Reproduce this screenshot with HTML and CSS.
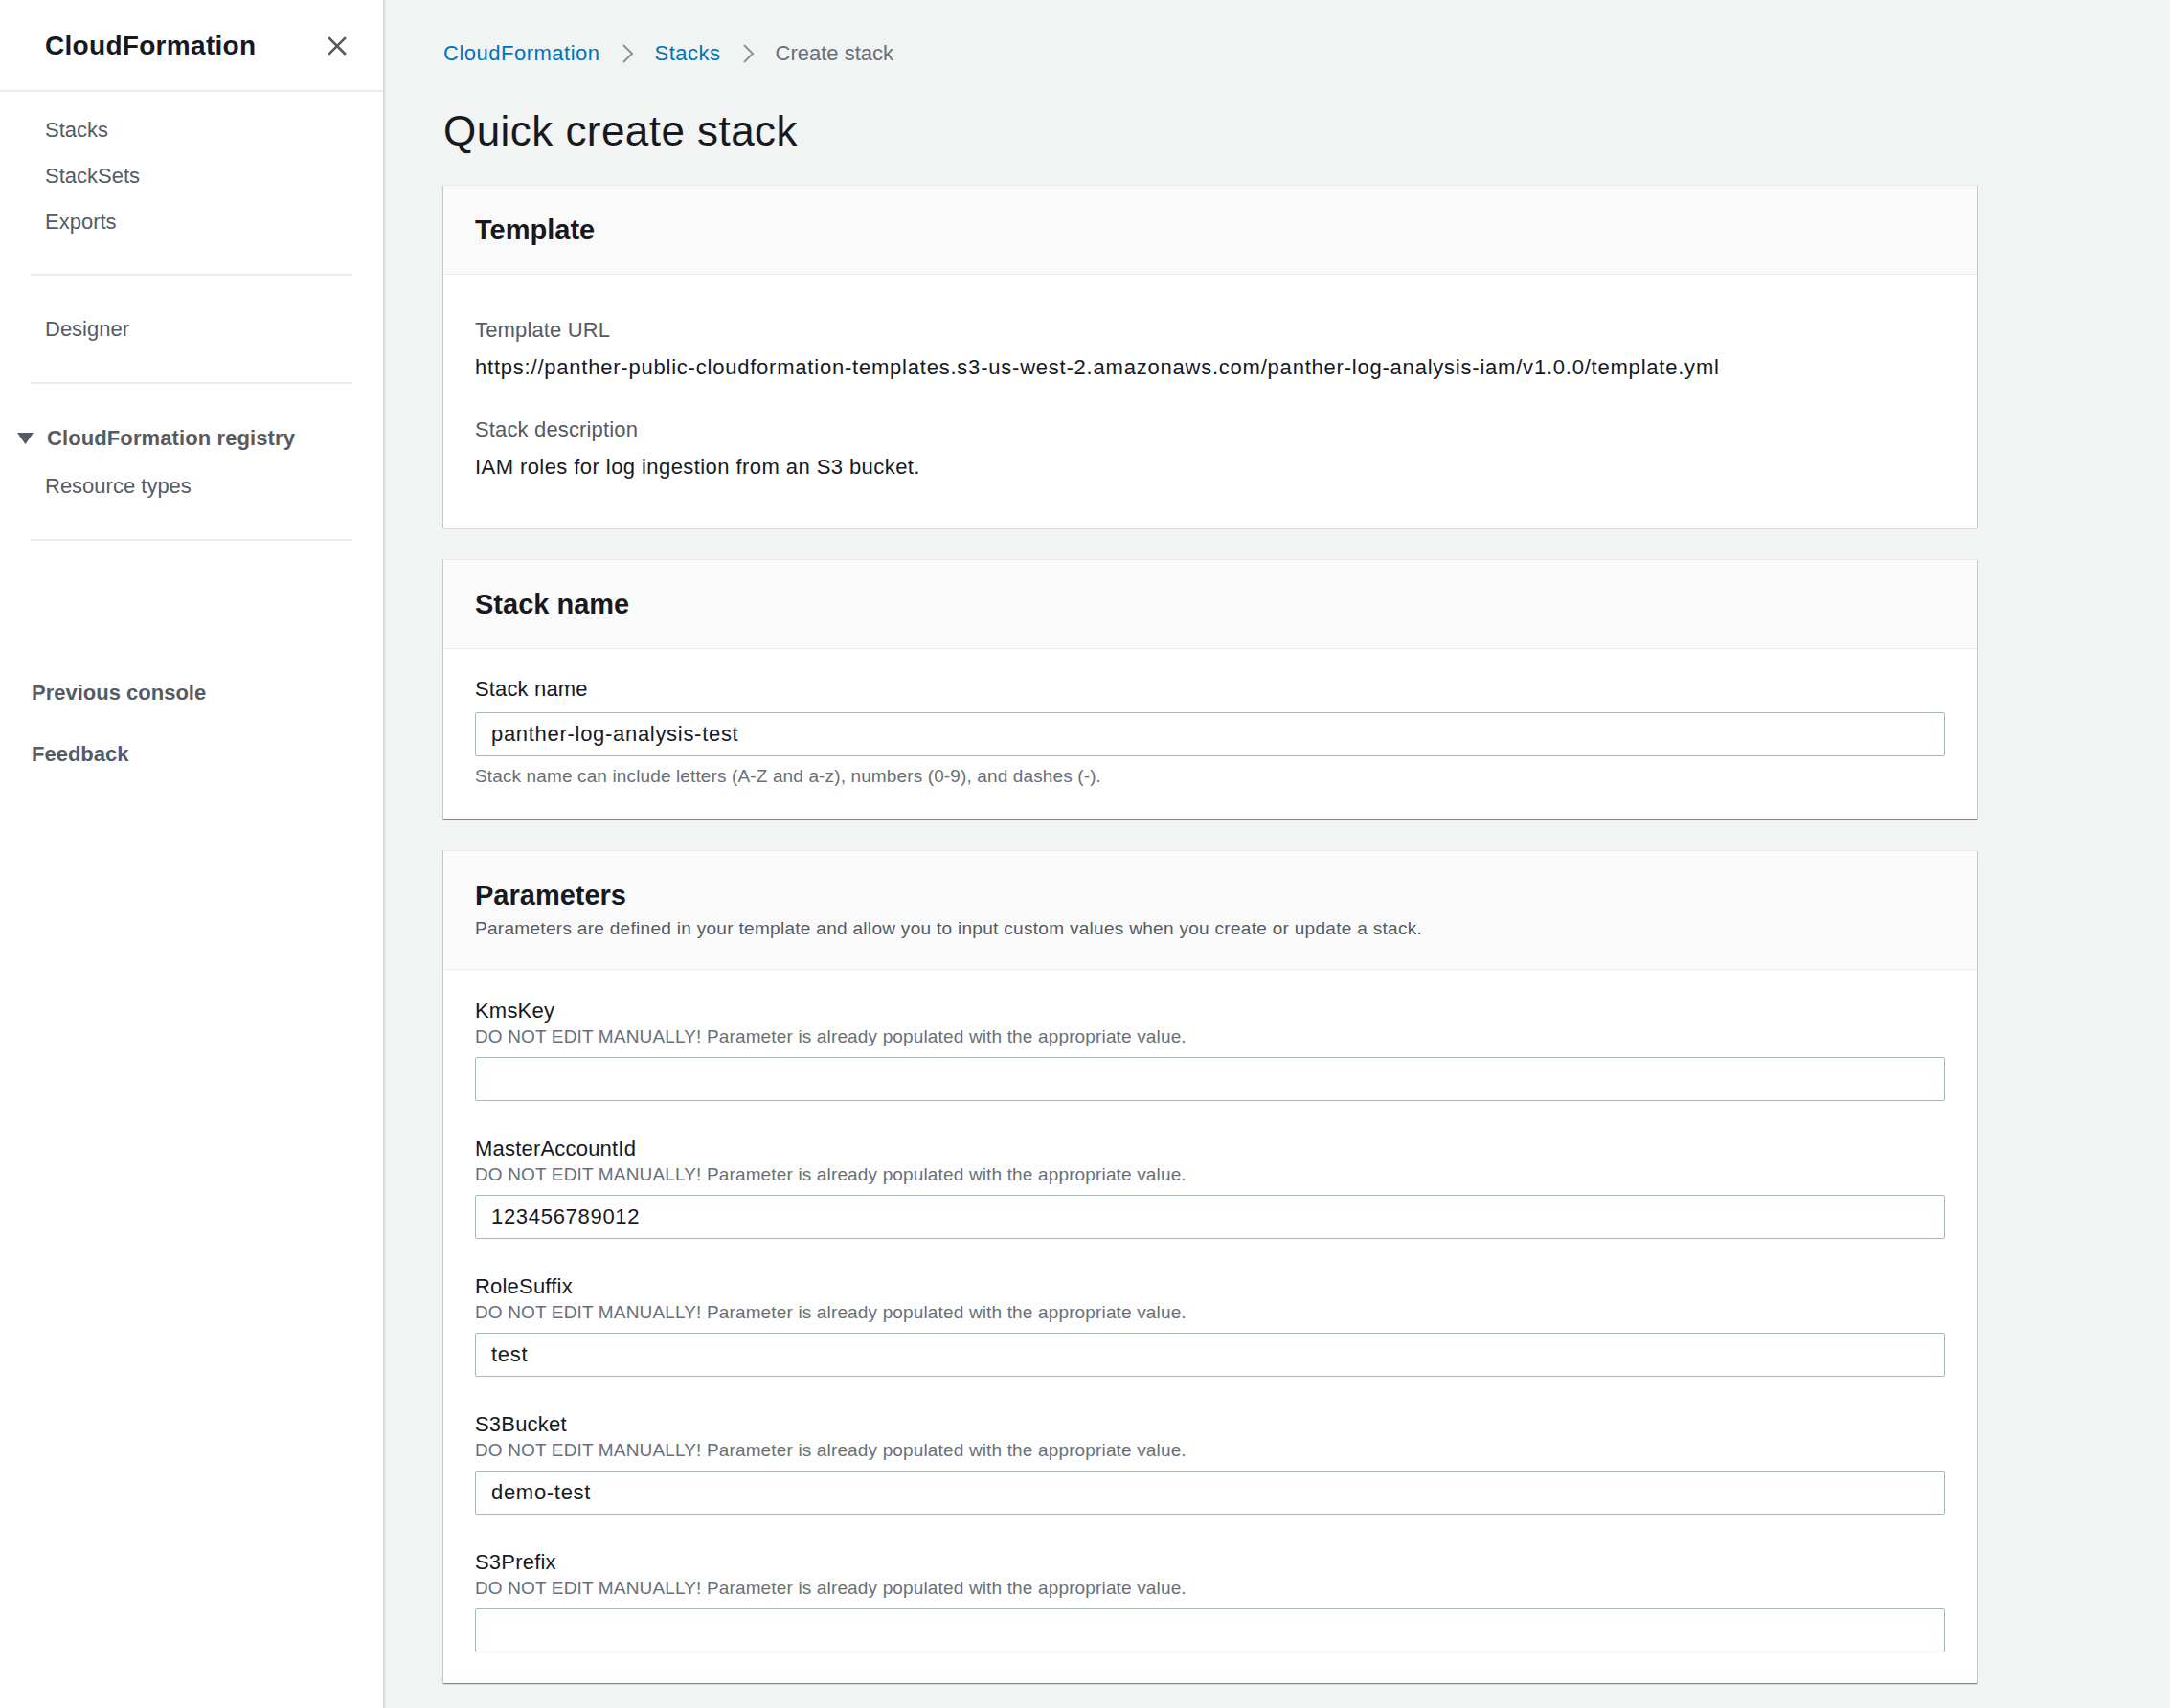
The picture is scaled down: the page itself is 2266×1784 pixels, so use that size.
FILE: index.html
```html
<!DOCTYPE html>
<html lang="en">
<head>
<meta charset="utf-8">
<title>Quick create stack</title>
<link rel="stylesheet" href="styles.css">
</head>
<body>
<div class="app">
  <aside class="sidenav">
    <div class="sidenav-header">
      <h2 class="sidenav-title">CloudFormation</h2>
      <button class="close-btn" aria-label="Close">
        <svg width="20" height="20" viewBox="0 0 20 20"><path d="M2 2 L18 18 M18 2 L2 18" stroke="#545b64" stroke-width="2.6" fill="none" stroke-linecap="square"/></svg>
      </button>
    </div>
    <ul class="nav-list nav-first">
      <li>Stacks</li>
      <li>StackSets</li>
      <li>Exports</li>
    </ul>
    <div class="nav-divider"></div>
    <ul class="nav-list nav-group">
      <li>Designer</li>
    </ul>
    <div class="nav-divider"></div>
    <div class="nav-section">
      <div class="section-toggle">
        <svg class="caret" width="17" height="12" viewBox="0 0 17 12"><path d="M0 0 H17 L8.5 12 Z" fill="#545b64"/></svg>
        <span>CloudFormation registry</span>
      </div>
      <ul class="nav-list">
        <li>Resource types</li>
      </ul>
    </div>
    <div class="nav-divider"></div>
    <ul class="nav-extra">
      <li>Previous console</li>
      <li>Feedback</li>
    </ul>
  </aside>

  <main class="main">
    <nav class="breadcrumb">
      <a class="crumb-link">CloudFormation</a>
      <svg class="crumb-sep" width="13" height="20" viewBox="0 0 13 20"><path d="M2 1 L11 10 L2 19" stroke="#879596" stroke-width="2" fill="none"/></svg>
      <a class="crumb-link">Stacks</a>
      <svg class="crumb-sep" width="13" height="20" viewBox="0 0 13 20"><path d="M2 1 L11 10 L2 19" stroke="#879596" stroke-width="2" fill="none"/></svg>
      <span class="crumb-current">Create stack</span>
    </nav>

    <h1 class="page-title">Quick create stack</h1>

    <section class="card">
      <div class="card-header">
        <h2 class="card-title">Template</h2>
      </div>
      <div class="card-body kv-body">
        <div class="kv">
          <div class="kv-label">Template URL</div>
          <div class="kv-value kv-url">https://panther-public-cloudformation-templates.s3-us-west-2.amazonaws.com/panther-log-analysis-iam/v1.0.0/template.yml</div>
        </div>
        <div class="kv">
          <div class="kv-label">Stack description</div>
          <div class="kv-value">IAM roles for log ingestion from an S3 bucket.</div>
        </div>
      </div>
    </section>

    <section class="card">
      <div class="card-header">
        <h2 class="card-title">Stack name</h2>
      </div>
      <div class="card-body name-body">
        <label class="field-label">Stack name</label>
        <input class="text-input name-input" type="text" value="panther-log-analysis-test">
        <div class="help-text">Stack name can include letters (A-Z and a-z), numbers (0-9), and dashes (-).</div>
      </div>
    </section>

    <section class="card">
      <div class="card-header">
        <h2 class="card-title">Parameters</h2>
        <p class="card-desc">Parameters are defined in your template and allow you to input custom values when you create or update a stack.</p>
      </div>
      <div class="card-body params-body">
        <div class="param">
          <div class="param-label">KmsKey</div>
          <div class="param-desc">DO NOT EDIT MANUALLY! Parameter is already populated with the appropriate value.</div>
          <input class="text-input" type="text" value="">
        </div>
        <div class="param">
          <div class="param-label">MasterAccountId</div>
          <div class="param-desc">DO NOT EDIT MANUALLY! Parameter is already populated with the appropriate value.</div>
          <input class="text-input" type="text" value="123456789012">
        </div>
        <div class="param">
          <div class="param-label">RoleSuffix</div>
          <div class="param-desc">DO NOT EDIT MANUALLY! Parameter is already populated with the appropriate value.</div>
          <input class="text-input" type="text" value="test">
        </div>
        <div class="param">
          <div class="param-label">S3Bucket</div>
          <div class="param-desc">DO NOT EDIT MANUALLY! Parameter is already populated with the appropriate value.</div>
          <input class="text-input" type="text" value="demo-test">
        </div>
        <div class="param">
          <div class="param-label">S3Prefix</div>
          <div class="param-desc">DO NOT EDIT MANUALLY! Parameter is already populated with the appropriate value.</div>
          <input class="text-input" type="text" value="">
        </div>
      </div>
    </section>
  </main>
</div>
</body>
</html>
```

FILE: styles.css
```css
* {
  box-sizing: border-box;
}

html, body {
  margin: 0;
  padding: 0;
  height: 100%;
}

body {
  overflow: hidden;
  background: #f2f3f3;
  font-family: "Liberation Sans", Arial, sans-serif;
  font-size: 22px;
  color: #16191f;
}

.app {
  display: flex;
  min-height: 100%;
}

/* ---------- Side navigation ---------- */
.sidenav {
  flex: 0 0 401px;
  width: 401px;
  background: #ffffff;
  border-right: 1px solid #d5dbdb;
  box-shadow: 1px 0 1px 0 rgba(0, 28, 36, 0.12);
  min-height: 1784px;
}

.sidenav-header {
  display: flex;
  align-items: center;
  justify-content: space-between;
  padding: 30px 38px 28px 47px;
  border-bottom: 2px solid #eaeded;
}

.sidenav-title {
  margin: 0;
  font-size: 28px;
  line-height: 36px;
  font-weight: 700;
  letter-spacing: 0.3px;
  color: #16191f;
}

.close-btn {
  display: flex;
  align-items: center;
  justify-content: center;
  width: 20px;
  height: 20px;
  padding: 0;
  border: 0;
  background: transparent;
}

.nav-list,
.nav-extra {
  list-style: none;
  margin: 0;
  padding: 0;
}

.nav-list li {
  padding-left: 47px;
  line-height: 48px;
  color: #545b64;
}

.nav-first {
  padding-top: 16px;
  padding-bottom: 30px;
}

.nav-group {
  padding-top: 32px;
  padding-bottom: 31px;
}

.nav-divider {
  height: 2px;
  margin: 0 32px;
  background: #eaeded;
}

.nav-section {
  padding-top: 33px;
  padding-bottom: 31px;
}

.section-toggle {
  display: flex;
  align-items: center;
  gap: 14px;
  padding-left: 18px;
  line-height: 48px;
  font-weight: 700;
  letter-spacing: 0.1px;
  color: #545b64;
  margin-bottom: 2px;
}

.caret {
  flex: 0 0 auto;
}

.nav-extra {
  padding-top: 135px;
}

.nav-extra li {
  padding-left: 33px;
  line-height: 48px;
  font-weight: 700;
  color: #545b64;
  margin-bottom: 16px;
}

/* ---------- Main content ---------- */
.main {
  flex: 1 1 auto;
  padding: 40px 202px 24px 62px;
}

.breadcrumb {
  display: flex;
  align-items: center;
  height: 32px;
  line-height: 32px;
}

.crumb-link {
  color: #0073bb;
  text-decoration: none;
  letter-spacing: 0.5px;
}

.crumb-sep {
  margin: 0 22px;
  flex: 0 0 auto;
}

.crumb-current {
  color: #687078;
}

.page-title {
  margin: 37px 0 28px;
  font-size: 44px;
  line-height: 56px;
  font-weight: 400;
  letter-spacing: 0.45px;
  color: #16191f;
}

.card {
  background: #ffffff;
  border-top: 1px solid #eaeded;
  box-shadow: 0 1px 1px 0 rgba(0, 28, 36, 0.3), 1px 1px 1px 0 rgba(0, 28, 36, 0.15), -1px 1px 1px 0 rgba(0, 28, 36, 0.15);
  margin-bottom: 33px;
}

.card-header {
  background: #fafafa;
  padding: 28px 33px 28px;
  border-bottom: 1px solid #eaeded;
}

.card-title {
  margin: 0;
  font-size: 29px;
  line-height: 36px;
  font-weight: 700;
  color: #16191f;
}

.card-desc {
  margin: 4px 0 0;
  font-size: 19px;
  line-height: 25px;
  letter-spacing: 0.3px;
  color: #545b64;
  padding-bottom: 2px;
}

.card-body {
  padding: 0 33px;
}

.kv-body {
  padding-top: 42px;
  padding-bottom: 48px;
}

.kv + .kv {
  margin-top: 34px;
}

.kv-label {
  line-height: 31px;
  letter-spacing: 0.15px;
  color: #545b64;
}

.kv-value {
  margin-top: 8px;
  line-height: 31px;
  letter-spacing: 0.43px;
  color: #16191f;
}

.kv-url {
  letter-spacing: 0.78px;
}

.name-body {
  padding-top: 26px;
  padding-bottom: 32px;
}

.field-label {
  display: block;
  line-height: 31px;
  letter-spacing: 0.15px;
  color: #16191f;
}

.text-input {
  display: block;
  width: 100%;
  height: 46px;
  margin-top: 9px;
  padding: 0 16px;
  border: 1px solid #aab7b8;
  border-radius: 2px;
  background: #ffffff;
  font-family: "Liberation Sans", Arial, sans-serif;
  font-size: 22px;
  letter-spacing: 0.7px;
  color: #16191f;
  outline: none;
}

.help-text {
  margin-top: 8px;
  font-size: 19px;
  line-height: 25px;
  letter-spacing: 0.13px;
  color: #687078;
}

.params-body {
  padding-top: 29px;
  padding-bottom: 32px;
}

.param + .param {
  margin-top: 36px;
}

.param-label {
  line-height: 28px;
  letter-spacing: 0.2px;
  color: #16191f;
}

.param-desc {
  font-size: 19px;
  line-height: 25px;
  letter-spacing: 0.15px;
  color: #687078;
}
```
